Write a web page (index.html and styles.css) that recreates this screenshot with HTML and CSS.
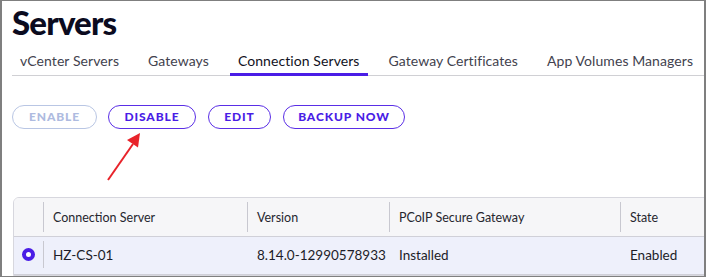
FILE: index.html
```html
<!DOCTYPE html>
<html>
<head>
<meta charset="utf-8">
<link rel="stylesheet" href="styles.css">
</head>
<body>
<div class="frame">
  <h1 class="title">Servers</h1>
  <nav class="tabs">
    <span class="tab">vCenter Servers</span>
    <span class="tab">Gateways</span>
    <span class="tab active">Connection Servers</span>
    <span class="tab">Gateway Certificates</span>
    <span class="tab">App Volumes Managers</span>
  </nav>
  <div class="actions">
    <button class="btn disabled">ENABLE</button>
    <button class="btn w-disable">DISABLE</button>
    <button class="btn w-edit">EDIT</button>
    <button class="btn w-backup">BACKUP NOW</button>
    <svg class="arrow" width="42" height="52" viewBox="0 0 42 52">
      <line x1="4" y1="48" x2="29" y2="12" stroke="#e8232a" stroke-width="2"/>
      <polygon points="36,1 34,15.5 23,8" fill="#e8232a"/>
    </svg>
  </div>
  <div class="grid">
    <div class="row head">
      <div class="cell sel"></div>
      <div class="cell c1">Connection Server</div>
      <div class="cell c2">Version</div>
      <div class="cell c3">PCoIP Secure Gateway</div>
      <div class="cell c4">State</div>
    </div>
    <div class="row body">
      <div class="cell sel"><span class="radio"></span></div>
      <div class="cell c1">HZ-CS-01</div>
      <div class="cell c2">8.14.0-12990578933</div>
      <div class="cell c3">Installed</div>
      <div class="cell c4">Enabled</div>
    </div>
  </div>
</div>
</body>
</html>
```

FILE: styles.css
```css
* { box-sizing: border-box; }
html, body { margin: 0; padding: 0; background: #fff; }
body {
  font-family: Lato, "Noto Sans", sans-serif;
  width: 706px;
  height: 279px;
  overflow: hidden;
}
.frame {
  width: 706px;
  height: 277px;
  border-left: 2px solid #7f7f7f;
  border-top: 1px solid #7f7f7f;
  border-right: 2px solid #7f7f7f;
  border-bottom: 1px solid #7f7f7f;
  padding-left: 10px;
  overflow: hidden;
  background: #fff;
}
.title {
  margin: 0;
  height: 42px;
  padding-top: 1px;
  font-size: 33px;
  line-height: 40px;
  font-weight: 900;
  color: #0b0b1f;
  letter-spacing: -0.8px;
}
.tabs {
  display: flex;
  gap: 13px;
  border-bottom: 1px solid #d0d0d4;
  height: 33px;
}
.tab {
  font-size: 14px;
  letter-spacing: 0.08px;
  color: #42424e;
  padding: 9px 8px 0;
  height: 32px;
  white-space: nowrap;
}
.tab.active {
  color: #111122;
  border-bottom: 3px solid #4a1de6;
  height: 33px;
}
.actions {
  position: relative;
  display: flex;
  align-items: flex-start;
  gap: 11px;
  padding-top: 29px;
  height: 121px;
}
.btn {
  font-family: Lato, "Noto Sans", sans-serif;
  flex-shrink: 0;
  height: 24px;
  border-radius: 12px;
  border: 1px solid #5a2ee6;
  background: #fff;
  color: #4a1de6;
  font-weight: 900;
  font-size: 12px;
  letter-spacing: 0.9px;
  padding: 0;
  line-height: 22px;
  white-space: nowrap;
  text-align: center;
}
.btn.disabled { border-color: #b9c6e4; color: #aebbe0; width: 85px; }
.w-disable { width: 88px; }
.w-edit { width: 63px; margin-left: 1px; }
.w-backup { width: 122px; margin-left: 1px; }
.arrow { position: absolute; left: 92px; top: 56px; }
.grid {
  margin-left: 1px;
  border: 1px solid #d7d7de;
  border-radius: 6px 6px 0 0;
  overflow: hidden;
  width: 700px;
}
.row { display: flex; }
.row.head { background: #f6f6f8; height: 39px; border-bottom: 1px solid #d0d0d8; }
.row.body { background: #eef0fb; height: 38px; border-bottom: 1px solid #d0d0d8; padding-bottom: 2px; }
.cell {
  flex-shrink: 0;
  color: #1c1c28;
  display: flex;
  align-items: center;
  padding-left: 10px;
  position: relative;
  white-space: nowrap;
}
.row.head .cell { font-size: 12.5px; color: #26262f; }
.row.body .cell { font-size: 13.5px; }
.cell.sel { width: 29px; padding-left: 0; justify-content: center; }
.c1 { width: 204px; }
.c2 { width: 142px; }
.c3 { width: 231px; }
.c4 { flex: 1; }
.cell + .cell::before {
  content: "";
  position: absolute;
  left: 0;
  top: 4px;
  bottom: 4px;
  width: 1px;
  background: #c8c8d0;
}
.row.body .cell.c2::before, .row.body .cell.c3::before, .row.body .cell.c4::before { display: none; }
.radio {
  width: 13px;
  height: 13px;
  border-radius: 50%;
  background: #fff;
  border: 4px solid #4a1de6;
}
```
